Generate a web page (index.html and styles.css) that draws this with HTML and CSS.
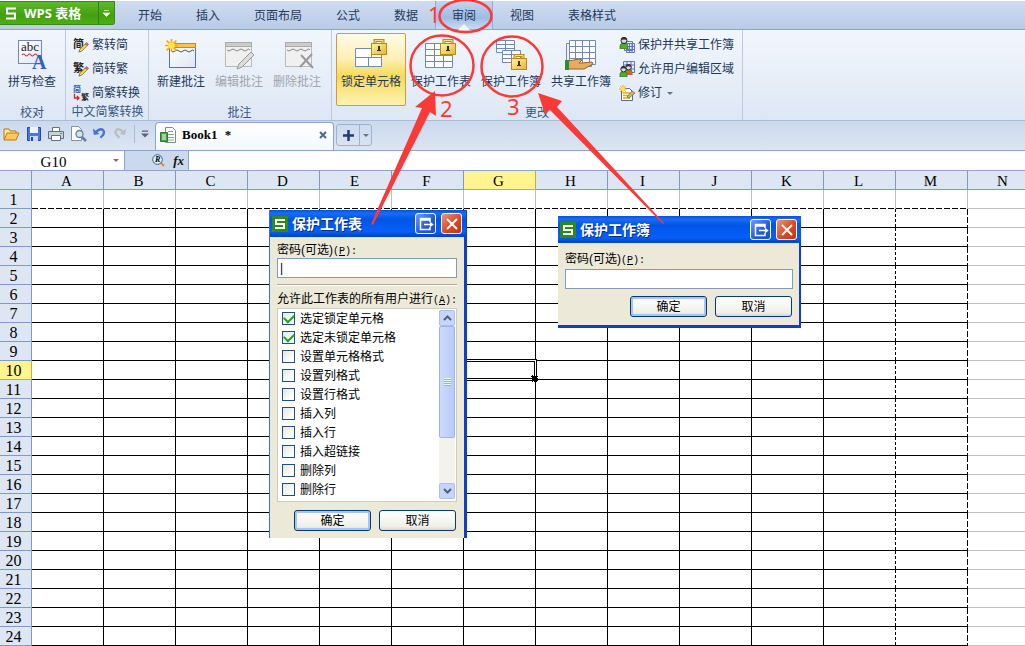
FILE: index.html
```html
<!DOCTYPE html>
<html lang="zh-CN">
<head>
  <meta charset="UTF-8" />
  <title>WPS 表格 - Book1</title>
  <link rel="stylesheet" href="styles.css">
</head>
<body>

  <!-- shared icon parts -->
  <svg class="defs" width="0" height="0" aria-hidden="true">
    <defs>
      <linearGradient id="gold" x1="0" y1="0" x2="1" y2="1">
        <stop offset="0" stop-color="#fff6a8" /><stop offset="1" stop-color="#e3b52c" />
      </linearGradient>
      <linearGradient id="page" x1="0" y1="0" x2="1" y2="1">
        <stop offset="0" stop-color="#fff" /><stop offset="1" stop-color="#dfe6f3" />
      </linearGradient>
      <symbol id="lock" viewBox="0 0 16 16">
        <path d="M4 6V1.500h8V6" fill="none" stroke="#b98a17" stroke-width="3" />
        <path d="M4 6V1.500h8V6" fill="none" stroke="#f8e287" stroke-width="1" />
        <rect x=".5" y="4.500" width="15" height="11" fill="url(#gold)" stroke="#b98a17" />
        <path d="M7 7h2v4h1v1H6v-1h1z" fill="#3d2c05" />
      </symbol>
      <symbol id="pen" viewBox="0 0 12 12">
        <path d="M1 11l1-3 6-6 2 2-6 6z" fill="#f4e04a" stroke="#6b5a1d" stroke-width=".8" />
        <path d="M8 2l1.500-1.500 2 2L10 4z" fill="#d86aa8" stroke="#7c3560" stroke-width=".6" />
      </symbol>
      <symbol id="star" viewBox="0 0 12 12">
        <path d="M6 0v12M0 6h12M1.500 1.500l9 9M10.500 1.500l-9 9" stroke="#f3a712" stroke-width="1.500" />
        <circle cx="6" cy="6" r="3" fill="#ffe83b" />
      </symbol>
      <symbol id="logo" viewBox="0 0 16 16">
        <rect width="16" height="16" fill="#318a17" />
        <path d="M13 4H4v4h8v4H3" fill="none" stroke="#fff" stroke-width="2" />
      </symbol>
      <symbol id="restore" viewBox="0 0 16 16">
        <path d="M12 6V2.500H2.500v11H12V11M2.500 4h9.500M6 8.500h8M12 6.500l2.500 2-2.500 2" fill="none" stroke="#fff" stroke-width="1.500" />
      </symbol>
      <symbol id="person" viewBox="0 0 10 12">
        <path d="M1 12V9q0-3 4-3t4 3v3z" fill="#4fae32" stroke="#2c701c" stroke-width=".7" />
        <circle cx="5" cy="3.500" r="3" fill="#d9d9d9" stroke="#222" />
        <path d="M2 3q0-3 3-3t3 3q-3-1-6 0" fill="#333" />
      </symbol>
    </defs>
  </svg>

  <header class="menubar">
    <button class="app-btn" type="button">
      <svg width="12" height="13" viewBox="0 0 12 13"><path d="M11 1.500H2v5h8v5H1" fill="none" stroke="#fff" stroke-width="2" /></svg>
      <span class="app-name">WPS 表格</span>
      <span class="app-more"><svg width="7" height="7" viewBox="0 0 7 7"><path d="M1 .5h5M0 3h7L3.500 6.500z" fill="#fff" stroke="#fff" stroke-width=".6" /></svg></span>
    </button>
    <nav class="tabs">
      <a href="#">开始</a>
      <a href="#">插入</a>
      <a href="#">页面布局</a>
      <a href="#">公式</a>
      <a href="#">数据</a>
      <a href="#" class="active">审阅</a>
      <a href="#">视图</a>
      <a href="#">表格样式</a>
    </nav>
  </header>

  <section class="ribbon">
    <div class="group">
      <div class="tools">
        <button class="big" type="button">
          <svg width="32" height="32" viewBox="0 0 32 32">
            <rect x="2.500" y="1.500" width="23" height="23" fill="url(#page)" stroke="#7387b5" />
            <text x="5" y="12" class="svg-abc">abc</text>
            <path d="M6 16q1.500-2 3 0t3 0 3 0 3 0 3 0 2 0" fill="none" stroke="#d43a3a" stroke-width="1.200" />
            <text x="16" y="30" class="svg-a">A</text>
          </svg>
          <span>拼写检查</span>
        </button>
      </div>
      <div class="caption">校对</div>
    </div>

    <div class="group convert">
      <div class="tools stack">
        <button class="small" type="button">
          <svg width="16" height="16" viewBox="0 0 16 16"><text x="0" y="11" class="svg-han">简</text><use href="#pen" x="5" y="5" width="11" height="11" /></svg>
          <span>繁转简</span>
        </button>
        <button class="small" type="button">
          <svg width="16" height="16" viewBox="0 0 16 16"><text x="0" y="11" class="svg-han">繁</text><use href="#pen" x="5" y="5" width="11" height="11" /></svg>
          <span>简转繁</span>
        </button>
        <button class="small" type="button">
          <svg width="16" height="16" viewBox="0 0 16 16"><text x="0" y="7" class="svg-han half blue">简</text><text x="8" y="15" class="svg-han half">繁</text><path d="M1.500 9v4h4M4 11l2 2-2 2" fill="none" stroke="#e02020" stroke-width="1.300" /></svg>
          <span>简繁转换</span>
        </button>
      </div>
      <div class="caption">中文简繁转换</div>
    </div>

    <div class="group notes">
      <div class="tools">
        <button class="big" type="button">
          <svg width="32" height="32" viewBox="0 0 32 32">
            <rect x="4.500" y="4.500" width="26" height="24" fill="url(#page)" stroke="#5672ad" />
            <rect x="4.500" y="4.500" width="26" height="4" fill="#f7c34d" stroke="#c78a22" />
            <path d="M6 12q2 2 4 0t4 0 4 0 4 0 4 0 3 0" fill="none" stroke="#555" />
            <use href="#star" width="13" height="13" />
          </svg>
          <span>新建批注</span>
        </button>
        <button class="big" type="button" disabled>
          <svg width="32" height="32" viewBox="0 0 32 32">
            <rect x="2.500" y="3.500" width="26" height="24" fill="#f0f0f0" stroke="#bbb" />
            <rect x="2.500" y="3.500" width="26" height="4" fill="#ccc" stroke="#aaa" />
            <path d="M4 11q2 2 4 0t4 0 4 0 4 0 4 0 3 0" fill="none" stroke="#888" />
            <path d="M14 30l2-5 12-12 3 3-12 12z" fill="#ddd" stroke="#999" />
          </svg>
          <span>编辑批注</span>
        </button>
        <button class="big" type="button" disabled>
          <svg width="32" height="32" viewBox="0 0 32 32">
            <rect x="4.500" y="3.500" width="26" height="24" fill="#f0f0f0" stroke="#bbb" />
            <rect x="4.500" y="3.500" width="26" height="4" fill="#ccc" stroke="#aaa" />
            <path d="M6 11q2 2 4 0t4 0 4 0 4 0 4 0 3 0" fill="none" stroke="#888" />
            <path d="M20 16l12 13M31 15L19 28" stroke="#999" stroke-width="2" />
          </svg>
          <span>删除批注</span>
        </button>
      </div>
      <div class="caption">批注</div>
    </div>

    <div class="group changes">
      <div class="tools">
        <button class="big wide pressed" type="button">
          <svg width="32" height="32" viewBox="0 0 32 32">
            <path d="M.5 9.500h26v18H.5zM.5 18.500h26M13.500 18.500v9M16.500 9.500v9" fill="#fff" stroke="#7189b8" />
            <use href="#lock" x="16" y="0" width="16" height="16" />
          </svg>
          <span>锁定单元格</span>
        </button>
        <button class="big wide" type="button">
          <svg width="32" height="32" viewBox="0 0 32 32">
            <path d="M.5 4.500h27v24H.5zM.5 10.500h27M.5 16.500h27M.5 22.500h27M9.500 4.500v24M18.500 4.500v24" fill="#fff" stroke="#7189b8" />
            <use href="#lock" x="15" y="0" width="16" height="16" />
          </svg>
          <span>保护工作表</span>
        </button>
        <button class="big wide" type="button">
          <svg width="32" height="32" viewBox="0 0 32 32">
            <path d="M1.500 1.500h18v12h-18zM1.500 5.500h18M1.500 9.500h18M10.500 1.500v12" fill="#fff" stroke="#7189b8" />
            <path d="M7.500 11.500h18v12h-18zM7.500 15.500h18M7.500 19.500h18M16.500 11.500v12" fill="#fff" stroke="#7189b8" />
            <use href="#lock" x="16" y="15" width="16" height="16" />
          </svg>
          <span>保护工作簿</span>
        </button>
        <button class="big wide" type="button">
          <svg width="32" height="32" viewBox="0 0 32 32">
            <path d="M1.500 4.500h25v23h-25z" fill="#eef3fa" stroke="#7189b8" />
            <path d="M4.500 1.500h26v24h-26zM4.500 7.500h26M4.500 13.500h26M4.500 19.500h26M10.500 1.500v24M17.500 1.500v24M24.500 1.500v24" fill="#fff" stroke="#7189b8" />
            <path d="M3 22l6-1 5-1 3 1-3 3h3l10-1 1 2-9 5H3z" fill="#e5ad62" stroke="#9c6420" />
            <rect x="0" y="21" width="4" height="10" fill="#2f8a37" />
          </svg>
          <span>共享工作簿</span>
        </button>
        <div class="stack share">
          <button class="small" type="button">
            <svg width="16" height="16" viewBox="0 0 16 16"><path d="M5.500 4.500h8v9h-8zM7.500 6.500h8v9h-8zM7.500 9.500h8M7.500 12.500h8M10.500 6.500v9M13 6.500v9" fill="#e6ecfa" stroke="#6177b5" /><use href="#person" x="0" y="0" width="10" height="12" /></svg>
            <span>保护并共享工作簿</span>
          </button>
          <button class="small" type="button">
            <svg width="16" height="16" viewBox="0 0 16 16"><path d="M4.500.5h11v11h-11zM4.500 4h11M4.500 8h11M8 .5v11M12 .5v11" fill="#e6ecfa" stroke="#6177b5" /><use href="#person" x="5" y="3" width="9" height="11" /><path d="M7 14v-3q4-3 6 0v3z" fill="#d9602a" /><use href="#person" x="0" y="5" width="9" height="11" /></svg>
            <span>允许用户编辑区域</span>
          </button>
          <button class="small" type="button">
            <svg width="16" height="16" viewBox="0 0 16 16"><path d="M2.500 3.500h8l3 3v9h-11z" fill="#fff" stroke="#5c6b8c" /><path d="M4 8h7M4 10.500h7M4 13h7" stroke="#e6a918" stroke-width="1.500" /><use href="#star" width="8" height="8" /><path d="M8 12l5-6 3 2-6 5z" fill="#f2b325" stroke="#3b74b5" stroke-width=".8" /></svg>
            <span>修订</span>
            <i class="caret"></i>
          </button>
        </div>
      </div>
      <div class="caption">更改</div>
    </div>
  </section>

  <section class="quickbar">
    <div class="quick">
      <button type="button" aria-label="打开"><svg width="17" height="16" viewBox="0 0 17 16"><path d="M1 13V3h5l1 2h6v3" fill="#ffe9a0" stroke="#b57b17" /><path d="M1 14l3-7h12l-3 7z" fill="#fcc95a" stroke="#b57b17" /></svg></button>
      <button type="button" aria-label="保存"><svg width="16" height="16" viewBox="0 0 16 16"><path d="M1.500 1.500h13v13h-13z" fill="#4a78dc" stroke="#2849a2" /><path d="M4 1h8v6H4z" fill="#eef4ff" /><path d="M4 10h8v5H4z" fill="#c8d8f6" /><path d="M5 11h2v4H5z" fill="#2849a2" /></svg></button>
      <button type="button" aria-label="打印"><svg width="16" height="16" viewBox="0 0 16 16"><path d="M4.500 6V1.500h7V6" fill="#fff" stroke="#5f7182" /><path d="M.5 5.500h15v7H.5z" fill="#c8d2dc" stroke="#5f7182" /><path d="M3.500 9.500h9v5h-9z" fill="#fff" stroke="#5f7182" /><path d="M12 7h2v1h-2z" fill="#38a038" /></svg></button>
      <button type="button" aria-label="打印预览"><svg width="16" height="16" viewBox="0 0 16 16"><path d="M1.500.5h7l3 3v11h-10z" fill="#fff" stroke="#8492a6" /><circle cx="9.500" cy="8" r="3.500" fill="#cfe5fa" stroke="#64809f" stroke-width="1.300" /><path d="M12 11l4 4" stroke="#64809f" stroke-width="2.500" /></svg></button>
      <button type="button" aria-label="撤销"><svg width="15" height="16" viewBox="0 0 16 16"><path d="M4 6q5-5 8-2 2.500 3-3 8" fill="none" stroke="#4776c8" stroke-width="2.500" /><path d="M1 2l1 7 6-1z" fill="#4776c8" /></svg></button>
      <button type="button" aria-label="恢复"><svg width="15" height="16" viewBox="0 0 16 16"><path d="M11 6Q6 1 3.500 4 1 7 7 12" fill="none" stroke="#b9bdc4" stroke-width="2.500" /><path d="M14 2l-1 7-6-1z" fill="#b9bdc4" /></svg></button>
      <i class="sep"></i>
      <button type="button" aria-label="自定义"><svg width="8" height="8" viewBox="0 0 9 8"><path d="M1 0h7v1.500H1zM0 3.500h9L4.500 8z" fill="#56657d" /></svg></button>
    </div>
    <div class="doc-tab">
      <svg width="16" height="16" viewBox="0 0 16 16"><path d="M5.500.5h7l3 3v12h-10z" fill="#fff" stroke="#7c8b84" /><path d="M8 4.500h5M8 7.500h6M8 10.500h6M8 13h6" stroke="#8da096" /><path d="M.5 5.500h7v9h-7z" fill="#47a247" stroke="#2c7b2c" /><path d="M2 8h4M2 10h4M2 12h4" stroke="#fff" /></svg>
      <span class="doc-name">Book1 <b>*</b></span>
      <button class="doc-close" type="button" aria-label="关闭"><svg width="8" height="8" viewBox="0 0 8 8"><path d="M1 1l6 6M7 1L1 7" stroke="#4c6a94" stroke-width="2" /></svg></button>
    </div>
    <div class="new-tab">
      <button type="button" aria-label="新建"><svg width="11" height="11" viewBox="0 0 11 11"><path d="M5.500 0v11M0 5.500h11" stroke="#1f3d70" stroke-width="2.500" /></svg></button>
      <button type="button" aria-label="更多"><i class="caret"></i></button>
    </div>
  </section>

  <section class="formula-bar">
    <div class="name-box">
      <input type="text" value="G10" aria-label="名称框">
      <i class="caret"></i>
    </div>
    <div class="fx-tools">
      <button type="button" aria-label="浏览"><svg width="13" height="13" viewBox="0 0 13 13"><path d="M8 8l4 4" stroke="#e08a2a" stroke-width="2" /><circle cx="5.500" cy="5.500" r="4.800" fill="#e2f0ff" stroke="#2f6292" /><text x="3" y="8" class="svg-r">R</text></svg></button>
      <button class="fx" type="button">fx</button>
    </div>
    <input class="formula" type="text" aria-label="编辑栏">
  </section>

  <main class="sheet">
    <table class="grid">
      <thead><tr id="colHeads"></tr></thead>
      <tbody id="rows"></tbody>
    </table>
  </main>

  <form class="dialog sheet-dialog">
    <div class="title">
      <svg width="16" height="16"><use href="#logo" width="16" height="16" /></svg>
      <span>保护工作表</span>
      <button class="win" type="button" aria-label="还原"><svg width="16" height="16"><use href="#restore" width="16" height="16" /></svg></button>
      <button class="win close" type="button" aria-label="关闭"><svg width="12" height="12" viewBox="0 0 12 12"><path d="M1 1l10 10M11 1L1 11" stroke="#fff" stroke-width="2" /></svg></button>
    </div>
    <div class="body">
      <label for="sheetPwd">密码(可选)<span class="key">(<u>P</u>):</span></label>
      <input class="field" type="text" id="sheetPwd" value="|">
      <hr>
      <div class="list-label" id="allow">允许此工作表的所有用户进行<span class="key">(<u>A</u>):</span></div>
      <div class="list" role="group" aria-labelledby="allow">
        <div class="options">
          <label><input type="checkbox" checked>选定锁定单元格</label>
          <label><input type="checkbox" checked>选定未锁定单元格</label>
          <label><input type="checkbox">设置单元格格式</label>
          <label><input type="checkbox">设置列格式</label>
          <label><input type="checkbox">设置行格式</label>
          <label><input type="checkbox">插入列</label>
          <label><input type="checkbox">插入行</label>
          <label><input type="checkbox">插入超链接</label>
          <label><input type="checkbox">删除列</label>
          <label><input type="checkbox">删除行</label>
        </div>
        <div class="scroll">
          <button type="button" aria-label="向上"><svg width="9" height="6" viewBox="0 0 9 6"><path d="M1 5l3.500-3.500L8 5" fill="none" stroke="#4d6185" stroke-width="2" /></svg></button>
          <div class="thumb"><i></i></div>
          <button type="button" aria-label="向下"><svg width="9" height="6" viewBox="0 0 9 6"><path d="M1 1l3.500 3.500L8 1" fill="none" stroke="#4d6185" stroke-width="2" /></svg></button>
        </div>
      </div>
      <div class="actions">
        <button class="default" type="button">确定</button>
        <button type="button">取消</button>
      </div>
    </div>
  </form>

  <form class="dialog book-dialog">
    <div class="title">
      <svg width="16" height="16"><use href="#logo" width="16" height="16" /></svg>
      <span>保护工作簿</span>
      <button class="win" type="button" aria-label="还原"><svg width="16" height="16"><use href="#restore" width="16" height="16" /></svg></button>
      <button class="win close" type="button" aria-label="关闭"><svg width="12" height="12" viewBox="0 0 12 12"><path d="M1 1l10 10M11 1L1 11" stroke="#fff" stroke-width="2" /></svg></button>
    </div>
    <div class="body">
      <label for="bookPwd">密码(可选)<span class="key">(<u>P</u>):</span></label>
      <input class="field" type="text" id="bookPwd">
      <div class="actions">
        <button class="default" type="button">确定</button>
        <button type="button">取消</button>
      </div>
    </div>
  </form>

  <!-- red step marks -->
  <svg class="marks" width="700" height="240" viewBox="0 0 700 240">
    <g fill="none" stroke="#f93a37" stroke-width="2.500">
      <ellipse cx="465.500" cy="16" rx="26" ry="16" />
      <ellipse cx="442" cy="65.500" rx="31.500" ry="30" />
      <ellipse cx="512" cy="66.500" rx="30.500" ry="30" />
    </g>
    <g fill="#f93a37">
      <path d="M435 91l-20 16 7 1L371 224l2 1 57-113 6 4z" />
      <path d="M538 93l24 8-5 6 107 116-1 1L550 110l-5 4z" />
      <text x="428" y="23">1</text>
      <text x="440" y="117">2</text>
      <text x="507" y="115">3</text>
    </g>
  </svg>

  <script>
    const cols = "ABCDEFGHIJKLMN".split("");
    const heads = document.getElementById("colHeads");
    const rows = document.getElementById("rows");

    heads.innerHTML = "<th class='corner'></th>" +
      cols.map(c => `<th class="${c === "G" ? "current" : ""}">${c}</th>`).join("");

    for (let r = 1; r <= 24; r++) {
      let fila = `<th class="${r === 10 ? "current" : ""}">${r}</th>`;
      cols.forEach(c => {
        let cls = "cell";
        if (c === "N") cls += " plain";
        else if (r === 1) cls += " top";
        else if (c === "L") cls += " short-dash";
        else if (c === "M") cls += " long-dash";
        if (c === "G" && r === 10) cls += " selected";
        fila += `<td class="${cls}"></td>`;
      });
      rows.innerHTML += `<tr>${fila}</tr>`;
    }
  </script>

</body>
</html>
```

FILE: styles.css
```css
* {
  box-sizing: border-box;
}
body {
  margin: 0;
  position: relative;
  overflow: hidden;
  background: #fff;
  color: #1e395b;
  font: 12px/16px "Liberation Sans", "Noto Sans CJK SC", sans-serif;
}
button, input {
  margin: 0;
  padding: 0;
  border: none;
  background: none;
  color: inherit;
  font: inherit;
}
svg {
  display: block;
  flex: none;
  overflow: visible;
}
.defs {
  position: absolute;
}
.caret {
  border: 3px solid transparent;
  border-top-color: #66748a;
  border-bottom: none;
}

/* menu */
.menubar {
  display: flex;
  height: 30px;
  border-top: 1px solid #fff;
  border-bottom: 1px solid #8ba5cc;
  background: linear-gradient(#cfdcf0, #b9cbe7);
}
.app-btn {
  display: flex;
  align-items: center;
  width: 115px;
  height: 24px;
  padding-left: 5px;
  border: 1px solid #3a8a12;
  border-left: none;
  border-radius: 0 0 3px 0;
  background: linear-gradient(#5fb92c, #43a010 60%, #4cae14);
  color: #fff;
}
.app-name {
  flex: 1;
  margin-left: 7px;
  font: bold 13px/16px "Open Sans", "Noto Sans CJK SC", sans-serif;
  text-align: left;
}
.app-more {
  display: flex;
  align-items: center;
  justify-content: center;
  width: 16px;
  height: 22px;
  border-left: 1px solid #2f820c;
}
.tabs {
  display: flex;
  margin-left: 6px;
}
.tabs a {
  position: relative;
  padding: 7px 17px 0;
  color: #1e395b;
  text-decoration: none;
}
.tabs .active {
  border: 1px solid #93abd0;
  border-width: 0 1px;
  padding: 7px 16px 0;
  background: linear-gradient(#c5d4ec, #9fbbe3 60%, #c9dcf5);
}
.tabs .active::after {
  content: "";
  position: absolute;
  left: 22px;
  bottom: -1px;
  border: 6px solid transparent;
  border-top: none;
  border-bottom-color: #f3f7fd;
}

/* ribbon */
.ribbon {
  display: flex;
  height: 91px;
  border-bottom: 1px solid #a9bcd9;
  background: linear-gradient(#f2f6fc, #dde7f4);
}
.group {
  display: flex;
  flex-direction: column;
  justify-content: space-between;
  padding: 3px 4px 2px 3px;
  border-right: 1px solid #bccae0;
}
.convert {
  padding-left: 7px;
  width: 83px;
}
.notes {
  width: 183px;
}
.changes {
  padding-left: 4px;
  width: 411px;
}
.tools {
  display: flex;
}
.caption {
  height: 14px;
  color: #3b5680;
  line-height: 14px;
  text-align: center;
  white-space: nowrap;
}
.convert .caption {
  margin: 0 -2px 0 -4px;
}
.big {
  display: flex;
  flex-direction: column;
  align-items: center;
  gap: 3px;
  width: 58px;
  height: 73px;
  padding-top: 6px;
  white-space: nowrap;
}
.big:disabled {
  color: #a0a6b0;
}
.wide {
  width: 70px;
}
.pressed {
  padding-top: 5px;
  border: 1px solid #d39a35;
  border-radius: 2px;
  background: linear-gradient(#fffbe9, #fdf0b4 35%, #f7d956 60%, #fff3b5);
}
.stack {
  display: flex;
  flex-direction: column;
}
.share {
  margin-left: 3px;
}
.small {
  display: flex;
  align-items: center;
  gap: 3px;
  height: 24px;
  white-space: nowrap;
}
.small .caret {
  margin-left: 2px;
}
.svg-abc {
  font: 13px "Liberation Serif", serif;
  fill: #222;
}
.svg-a {
  font: bold 20px "Liberation Serif", serif;
  fill: #2c62b8;
}
.svg-han {
  font: bold 11px "Noto Sans CJK SC", sans-serif;
  fill: #222;
}
.svg-han.half {
  font-size: 8px;
}
.svg-han.blue {
  fill: #2660c0;
}
.svg-r {
  font: italic bold 8px "Liberation Serif", serif;
}

/* quick access and document tabs */
.quickbar {
  display: flex;
  height: 30px;
  border-bottom: 1px solid #8ba5cc;
  background: linear-gradient(#ccd9ed, #dbe5f3);
}
.quick {
  display: flex;
  align-items: center;
  gap: 6px;
  width: 155px;
  padding: 0 6px 4px 3px;
}
.sep {
  width: 1px;
  height: 18px;
  background: #aabbd5;
}
.doc-tab {
  display: flex;
  align-items: center;
  width: 179px;
  margin-top: 1px;
  padding: 0 6px 3px 4px;
  border: 1px solid #8ba5cc;
  border-bottom: none;
  border-radius: 4px 4px 0 0;
  background: linear-gradient(#fff, #f3f7fc);
}
.doc-name {
  flex: 1;
  margin-left: 6px;
  color: #000;
  font: bold 13px/16px "Liberation Serif", serif;
}
.doc-name b {
  margin-left: 4px;
}
.new-tab {
  display: flex;
  width: 36px;
  height: 22px;
  margin: 3px 0 0 2px;
  border: 1px solid #9db2d2;
  border-radius: 3px;
}
.new-tab button {
  display: flex;
  flex: 1;
  align-items: center;
  justify-content: center;
}
.new-tab button:first-child {
  flex: 2;
  border-right: 1px solid #9db2d2;
}

/* formula bar */
.formula-bar {
  display: flex;
  height: 20px;
  border-bottom: 1px solid #8ba5cc;
  background: #fff;
}
.name-box {
  display: flex;
  align-items: center;
  width: 125px;
  padding-right: 5px;
  border-right: 1px solid #8ba5cc;
}
.name-box input {
  flex: 1;
  min-width: 0;
  padding: 2px 6px 0 0;
  color: #000;
  font: 15px/16px "Liberation Serif", serif;
  text-align: center;
}
.fx-tools {
  display: flex;
  align-items: center;
  justify-content: flex-end;
  gap: 8px;
  width: 64px;
  padding-right: 4px;
  border-right: 1px solid #8ba5cc;
  background: #cbd9ee;
}
.fx {
  color: #111;
  font: italic bold 13px/16px "Liberation Serif", serif;
}
.formula {
  flex: 1;
}

/* grid */
.sheet {
  overflow: hidden;
}
.grid {
  width: 1040px;
  table-layout: fixed;
  border-spacing: 0;
}
.grid th, .grid td {
  height: 19px;
  padding: 0;
}
.grid th {
  padding-top: 2px;
  border-right: 1px solid #7f9bc5;
  border-bottom: 1px solid #7f9bc5;
  background: #dde6f2;
  color: #000;
  font: 16px/16px "Liberation Serif", serif;
}
.grid thead th {
  width: 72px;
  padding-right: 2px;
  font-size: 15px;
}
.grid .corner {
  width: 32px;
}
.grid tbody th {
  padding-right: 4px;
}
.grid .current {
  border-color: #d0a93a;
  background: #fff48e;
}
.cell {
  position: relative;
  border-right: 1px solid #000;
  border-bottom: 1px solid #000;
}
.plain {
  border-color: #c0c0c0;
}
.top {
  border-right-color: #c0c0c0;
  border-bottom: none;
  background: repeating-linear-gradient(90deg, #000 0 6px, #fff 6px 8px) bottom / 100% 1px no-repeat;
}
.short-dash {
  border-right: none;
  background: repeating-linear-gradient(#000 0 3px, #fff 3px 5px) right / 1px 100% no-repeat;
}
.long-dash {
  border-right: none;
  background: repeating-linear-gradient(#000 0 6px, #fff 6px 8px) right / 1px 100% no-repeat;
}
.selected::before {
  content: "";
  position: absolute;
  inset: -2px;
  border: 3px double #000;
  background: #fff;
}
.selected::after {
  content: "";
  position: absolute;
  right: -3px;
  bottom: -3px;
  width: 5px;
  height: 5px;
  border: 1px dotted #fff;
  background: #000;
}

/* dialogs */
.dialog {
  position: absolute;
  border-right: 3px solid #0a3fd0;
  background: #ece9d8;
  color: #000;
}
.sheet-dialog {
  left: 269px;
  top: 210px;
  width: 198px;
  border-left: 1px solid #3a6be0;
}
.book-dialog {
  left: 558px;
  top: 216px;
  width: 243px;
  border-right-width: 2px;
  border-bottom: 3px solid #0a3fd0;
}
.title {
  display: flex;
  align-items: center;
  gap: 4px;
  height: 27px;
  margin-right: -2px;
  padding: 0 4px 0 2px;
  background: linear-gradient(#0a50d8, #1a6cf5 12%, #0055e5 35%, #0560fa 80%, #0040c0);
  color: #fff;
  font-size: 14px;
  font-weight: bold;
  text-shadow: 1px 1px #0a2a80;
}
.title span {
  flex: 1;
}
.win {
  display: flex;
  align-items: center;
  justify-content: center;
  width: 21px;
  height: 21px;
  margin-left: 1px;
  border: 1px solid #fff;
  border-radius: 3px;
  background: linear-gradient(135deg, #6d9bf5, #2459d8 60%, #1f50c8);
}
.close {
  background: linear-gradient(135deg, #ee9478, #da4a24 55%, #c03512);
}
.body {
  padding: 5px 7px 7px;
}
.book-dialog .body {
  padding: 8px 6px 8px 7px;
}
.book-dialog .field {
  margin-top: 2px;
}
.body label, .list-label {
  display: block;
  height: 16px;
  white-space: nowrap;
}
.key {
  font: 10px/16px "Liberation Mono", monospace;
}
.field {
  display: block;
  width: 100%;
  height: 20px;
  padding: 0 2px;
  border: 1px solid #7f9db9;
  background: #fff;
}
hr {
  height: 2px;
  margin: 6px 0 5px;
  border: none;
  border-top: 1px solid #aca899;
  border-bottom: 1px solid #fff;
}
.list {
  display: flex;
  justify-content: space-between;
  margin-top: 1px;
  padding: 1px 1px 2px 4px;
  border: 1px solid #d0cdbd;
  background: #fff;
}
.options {
  margin-top: -1px;
}
.options label {
  display: flex;
  align-items: center;
  gap: 5px;
  height: 19px;
}
.options input {
  appearance: none;
  display: flex;
  align-items: center;
  justify-content: center;
  width: 13px;
  height: 13px;
  border: 1px solid #1c5180;
  background: linear-gradient(135deg, #e4e4e0, #fff 80%);
}
.options input:checked::before {
  content: "";
  width: 8px;
  height: 5px;
  margin-bottom: 2px;
  border: 2px solid #21a121;
  border-width: 0 0 2px 2px;
  transform: rotate(-45deg);
}
.scroll {
  display: flex;
  flex-direction: column;
  width: 16px;
  background: #f3f2ec;
}
.scroll button {
  display: flex;
  align-items: center;
  justify-content: center;
  height: 16px;
  border: 1px solid #a9c0f0;
  border-radius: 2px;
  background: #c5d5fc;
}
.scroll button:last-child {
  margin-top: auto;
}
.thumb {
  display: flex;
  align-items: center;
  justify-content: center;
  height: 112px;
  border: 1px solid #9cb4ea;
  border-radius: 2px;
  background: linear-gradient(90deg, #cddbfd, #b7cbf9);
}
.thumb i {
  width: 7px;
  height: 8px;
  background: repeating-linear-gradient(#eef4fe 0 1px, #8cb0f8 1px 2px);
}
.actions {
  display: flex;
  justify-content: flex-end;
  gap: 8px;
  margin: 8px 1px 0 0;
}
.book-dialog .actions {
  margin-top: 7px;
}
.actions button {
  width: 77px;
  height: 21px;
  border: 1px solid #003c74;
  border-radius: 3px;
  background: linear-gradient(#fff, #f0f0ea 80%, #dcd7cb);
}
.actions .default {
  box-shadow: inset 0 0 0 2px #a9c4f2;
}

.marks {
  position: absolute;
  left: 0;
  top: 0;
  pointer-events: none;
}
.marks text {
  font: 22px "Noto Sans", sans-serif;
}
```
